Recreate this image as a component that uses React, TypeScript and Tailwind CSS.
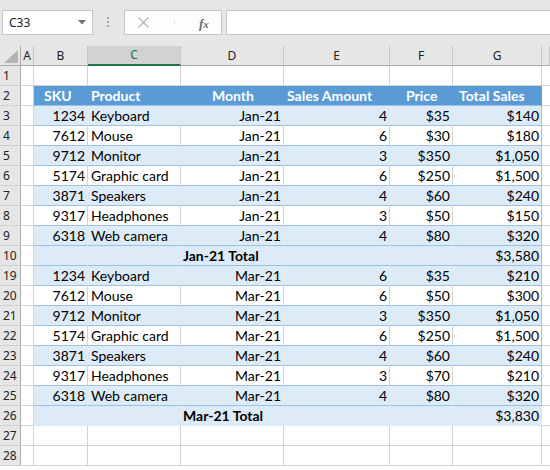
import React from "react";

type RowType = "empty" | "header" | "blue" | "white" | "total";
interface Row {
  n: number;
  type: RowType;
  cells?: string[];
}

const rows: Row[] = [
  { n: 1, type: "empty" },
  { n: 2, type: "header", cells: ["SKU", "Product", "Month", "Sales Amount", "Price", "Total Sales"] },
  { n: 3, type: "blue", cells: ["1234", "Keyboard", "Jan-21", "4", "$35", "$140"] },
  { n: 4, type: "white", cells: ["7612", "Mouse", "Jan-21", "6", "$30", "$180"] },
  { n: 5, type: "blue", cells: ["9712", "Monitor", "Jan-21", "3", "$350", "$1,050"] },
  { n: 6, type: "white", cells: ["5174", "Graphic card", "Jan-21", "6", "$250", "$1,500"] },
  { n: 7, type: "blue", cells: ["3871", "Speakers", "Jan-21", "4", "$60", "$240"] },
  { n: 8, type: "white", cells: ["9317", "Headphones", "Jan-21", "3", "$50", "$150"] },
  { n: 9, type: "blue", cells: ["6318", "Web camera", "Jan-21", "4", "$80", "$320"] },
  { n: 10, type: "total", cells: ["", "", "Jan-21 Total", "", "", "$3,580"] },
  { n: 19, type: "blue", cells: ["1234", "Keyboard", "Mar-21", "6", "$35", "$210"] },
  { n: 20, type: "white", cells: ["7612", "Mouse", "Mar-21", "6", "$50", "$300"] },
  { n: 21, type: "blue", cells: ["9712", "Monitor", "Mar-21", "3", "$350", "$1,050"] },
  { n: 22, type: "white", cells: ["5174", "Graphic card", "Mar-21", "6", "$250", "$1,500"] },
  { n: 23, type: "blue", cells: ["3871", "Speakers", "Mar-21", "4", "$60", "$240"] },
  { n: 24, type: "white", cells: ["9317", "Headphones", "Mar-21", "3", "$70", "$210"] },
  { n: 25, type: "blue", cells: ["6318", "Web camera", "Mar-21", "4", "$80", "$320"] },
  { n: 26, type: "total", cells: ["", "", "Mar-21 Total", "", "", "$3,830"] },
  { n: 27, type: "empty" },
  { n: 28, type: "empty" },
];

const cellFont = "font-['Lato','Liberation_Sans',sans-serif] text-[14px] leading-[19px] text-black";
const uiFont = "font-['Noto_Sans','Liberation_Sans',sans-serif]";

const headerAlign = [
  "justify-start pl-[10px]",
  "justify-start pl-[3px]",
  "justify-start pl-[31px]",
  "justify-start pl-[3px]",
  "justify-start pl-[16px]",
  "justify-start pl-[6px]",
];

function alignFor(col: number, type: RowType): string {
  if (type === "header") return headerAlign[col];
  if (type === "total") {
    if (col === 2) return "justify-start pl-[2px]";
    return "justify-end pr-[2px]";
  }
  if (col === 1) return "justify-start pl-[3px]";
  return "justify-end pr-[2px]";
}

function tableCellClass(col: number, type: RowType, isLast26: boolean): string {
  const last = col === 5;
  if (type === "header") {
    return "bg-[#5b9bd5] border-b border-r border-b-[#9bc2e6] border-r-[#5b9bd5] text-white font-bold";
  }
  if (type === "blue") {
    return last
      ? "bg-[#ddebf7] border-b border-r border-b-[#9bc2e6] border-r-[#9bc2e6]"
      : "bg-[#ddebf7] border-b border-r border-b-[#9bc2e6] border-r-[#ddebf7]";
  }
  if (type === "white") {
    return last
      ? "bg-white border-b border-r border-b-[#9bc2e6] border-r-[#9bc2e6]"
      : "bg-white border-b border-r border-b-[#9bc2e6] border-r-[#d4d4d4]";
  }
  if (isLast26) {
    return "bg-[#ddebf7] border-b border-r border-b-[#ddebf7] border-r-[#ddebf7]";
  }
  return last
    ? "bg-[#ddebf7] border-b border-r border-b-[#9bc2e6] border-r-[#9bc2e6]"
    : "bg-[#ddebf7] border-b border-r border-b-[#9bc2e6] border-r-[#ddebf7]";
}

function TopBar() {
  return (
    <div className="h-[46px] bg-[#e6e6e6] relative">
      <div className="absolute left-[2px] top-[10px] w-[91px] h-[25px] bg-white border border-[#c6c6c6] flex items-center">
        <span className={`${uiFont} text-[12px] text-[#222] pl-[6px]`}>C33</span>
        <svg className="absolute right-[6px] top-[9px]" width="8" height="5" viewBox="0 0 8 5">
          <polygon points="0,0 8,0 4,4.5" fill="#707070" />
        </svg>
      </div>
      <div className="absolute left-[107px] top-[17px] flex flex-col gap-[2px]">
        <div className="w-[2px] h-[2px] bg-[#a6a6a6]" />
        <div className="w-[2px] h-[2px] bg-[#a6a6a6]" />
        <div className="w-[2px] h-[2px] bg-[#a6a6a6]" />
      </div>
      <div className="absolute left-[124px] top-[10px] w-[98px] h-[25px] bg-[#fdfdfd] border border-[#c6c6c6]">
        <svg className="absolute left-[13px] top-[6px]" width="11" height="11" viewBox="0 0 11 11">
          <path d="M0.5 0.5 L10.5 10.5 M10.5 0.5 L0.5 10.5" stroke="#b4b4b4" strokeWidth="1.2" />
        </svg>
        <div className="absolute left-[49px] top-[9px] w-[1px] h-[5px] bg-[#dcdcdc]" />
        <span className="absolute left-[74px] top-[3px] font-['Liberation_Serif',serif] italic font-bold text-[13px] text-[#6a6a6a]">
          f<span className="text-[11px]">x</span>
        </span>
      </div>
      <div className="absolute left-[226px] top-[10px] w-[330px] h-[25px] bg-white border border-[#c6c6c6]" />
    </div>
  );
}

const gridCols = "grid grid-cols-[21px_13px_54px_93px_103px_106px_63px_89px_1fr]";

function ColumnHeaders() {
  const letters = ["A", "B", "C", "D", "E", "F", "G", ""];
  return (
    <div className={`${gridCols} h-[20px]`}>
      <div className="relative bg-[#e6e6e6] border-r border-b border-r-[#ababab] border-b-[#ababab]">
        <svg className="absolute right-[2px] bottom-[2px]" width="14" height="13" viewBox="0 0 14 13">
          <polygon points="14,0 14,13 0,13" fill="#b4b4b4" />
        </svg>
      </div>
      {letters.map((l, i) =>
        l === "C" ? (
          <div
            key={i}
            className={`${uiFont} bg-[#d2d2d2] border-r border-b-2 border-r-[#c6c6c6] border-b-[#217346] text-[#217346] text-[12px] flex items-center justify-center`}
          >
            {l}
          </div>
        ) : (
          <div
            key={i}
            className={`${uiFont} bg-[#e6e6e6] border-r border-b border-r-[#c6c6c6] border-b-[#ababab] text-[#222] text-[12px] flex items-center justify-center`}
          >
            {l}
          </div>
        )
      )}
    </div>
  );
}

function SheetRow({ row }: { row: Row }) {
  return (
    <div className={`${gridCols} h-[20px]`}>
      <div
        className={`${uiFont} bg-[#e6e6e6] border-r border-b border-r-[#ababab] border-b-[#d0d0d0] text-[12px] text-[#222] flex items-center pl-[3px]`}
      >
        {row.n}
      </div>
      <div className="bg-white border-r border-b border-[#d4d4d4]" />
      {row.type === "empty" || !row.cells
        ? [0, 1, 2, 3, 4, 5].map((i) => (
            <div key={i} className="bg-white border-r border-b border-[#d4d4d4]" />
          ))
        : row.cells.map((c, i) => (
            <div
              key={i}
              className={`${tableCellClass(i, row.type, row.n === 26)} ${cellFont} ${
                row.type === "header" ? "text-white" : ""
              } ${row.type === "total" && i === 2 ? "font-bold" : ""} ${alignFor(
                i,
                row.type
              )} flex items-center whitespace-nowrap overflow-visible`}
            >
              {c}
            </div>
          ))}
      <div className="bg-white border-b border-[#d4d4d4]" />
    </div>
  );
}

export default function App() {
  return (
    <div className="w-[550px] h-[470px] overflow-hidden bg-white">
      <TopBar />
      <ColumnHeaders />
      {rows.map((r) => (
        <SheetRow key={r.n} row={r} />
      ))}
    </div>
  );
}
